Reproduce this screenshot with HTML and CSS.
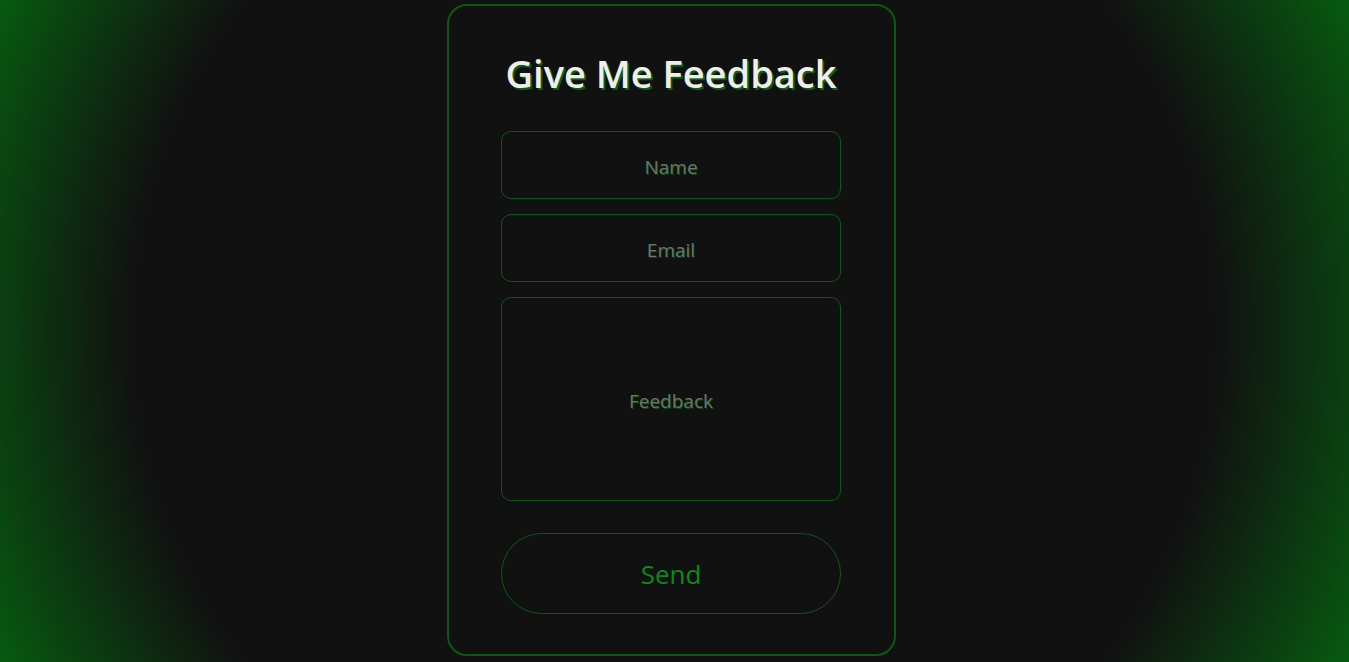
FILE: index.html
```html
<!DOCTYPE html>
<html lang="en">
<head>
<meta charset="utf-8">
<title>Give Me Feedback</title>
<link rel="stylesheet" href="styles.css">
</head>
<body>
<main class="page">
  <form class="card">
    <h1 class="title">Give Me Feedback</h1>
    <div class="fields">
      <input class="field" type="text" placeholder="Name">
      <input class="field" type="email" placeholder="Email">
      <textarea class="field field-area" placeholder="Feedback"></textarea>
    </div>
    <button class="send" type="button">Send</button>
  </form>
</main>
</body>
</html>
```
FILE: styles.css
```css
html, body {
  margin: 0;
  height: 100%;
}
body {
  background: radial-gradient(circle farthest-corner at 50% 50%, #111111 72%, #075a10 100%);
  font-family: "Open Sans", "Noto Sans", sans-serif;
}
.page {
  height: 100%;
  display: flex;
  justify-content: center;
  align-items: flex-start;
  padding-right: 6px;
  box-sizing: border-box;
}
.card {
  margin-top: 4px;
  width: 449px;
  height: 652px;
  box-sizing: border-box;
  border: 2px solid #0b5a14;
  border-radius: 20px;
  background: #111111;
  padding: 42px 53px 0 52px;
  display: flex;
  flex-direction: column;
}
.title {
  margin: 0;
  text-align: center;
  font-size: 38px;
  font-weight: 600;
  line-height: 50px;
  color: #f1eded;
  text-shadow: 2px 2px 0 #0b5e14;
}
.fields {
  margin-top: 33px;
  display: flex;
  flex-direction: column;
  gap: 15px;
}
.field {
  box-sizing: border-box;
  width: 340px;
  height: 68px;
  background: transparent;
  border: 1px solid #0b5a14;
  border-radius: 10px;
  text-align: center;
  font-family: "Open Sans", "Noto Sans", sans-serif;
  font-size: 19px;
  color: #cfcfcf;
  outline: none;
  resize: none;
  padding: 3px 10px 0;
}
.field::placeholder {
  color: #6a756a;
  text-shadow: 1px 1px 0 #0b4a12;
}
.field-area {
  height: 204px;
  padding-top: 90px;
}
.send {
  margin-top: 32px;
  width: 340px;
  height: 81px;
  box-sizing: border-box;
  border: 1px solid #0b5a14;
  border-radius: 41px;
  background: transparent;
  color: #0b8a18;
  font-family: "Open Sans", "Noto Sans", sans-serif;
  font-size: 26px;
  padding-top: 2px;
  cursor: pointer;
}
```
